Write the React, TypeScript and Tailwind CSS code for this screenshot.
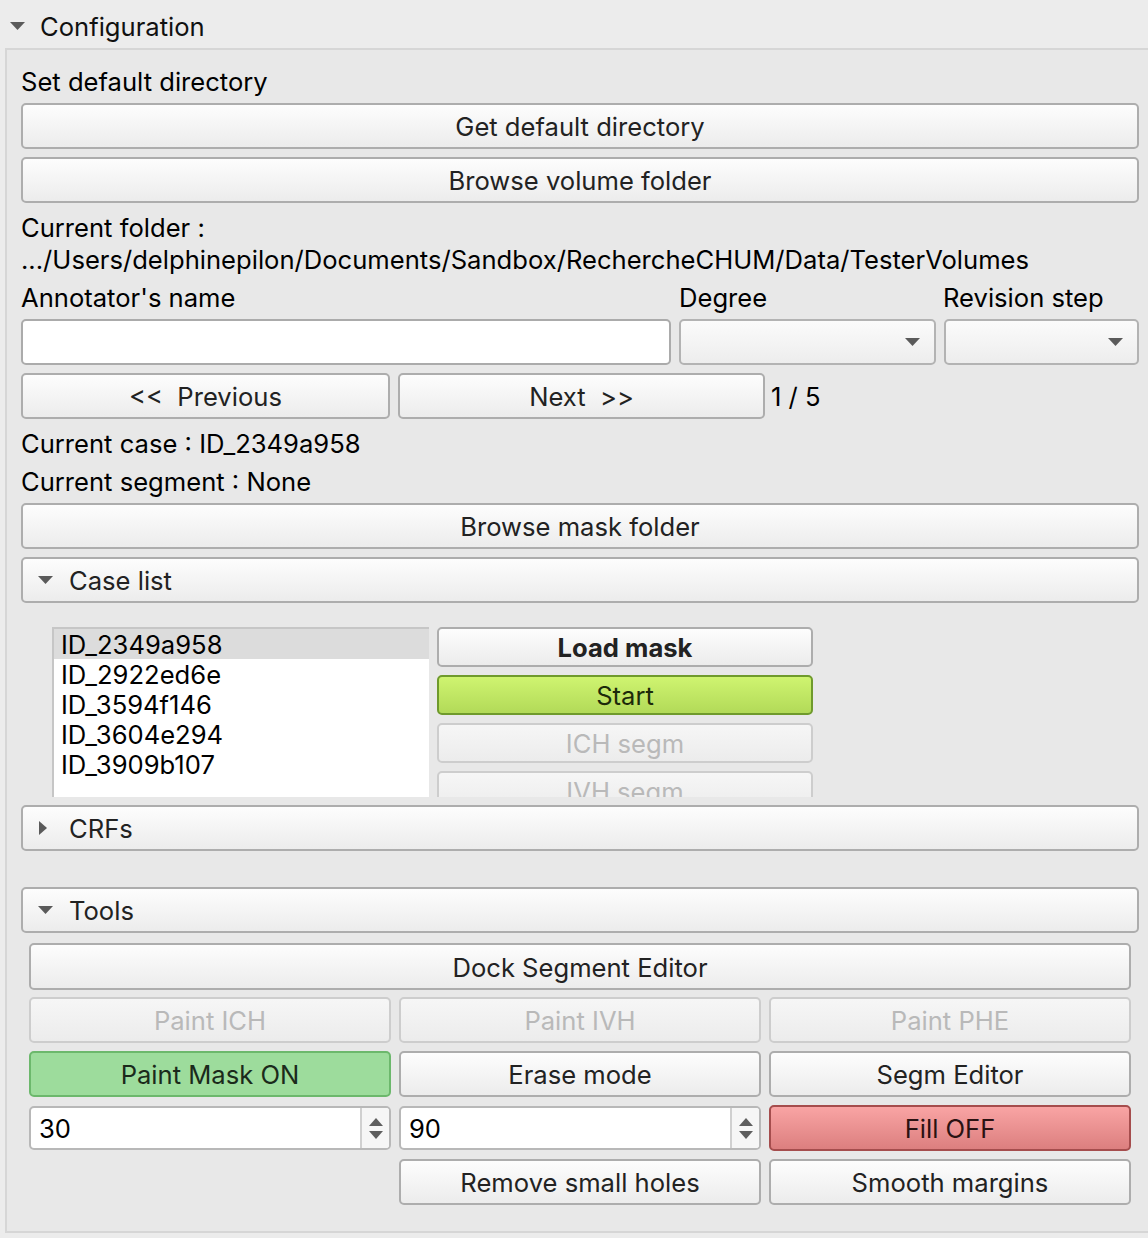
import React from "react";

const font = { fontFamily: "Inter, 'Noto Sans', sans-serif" };

function Tri({ dir = "down" }: { dir?: "down" | "right" }) {
  if (dir === "right")
    return (
      <svg width="10" height="16" viewBox="0 0 10 16" className="shrink-0">
        <path d="M1 1 L9 8 L1 15 Z" fill="#5a5a5a" />
      </svg>
    );
  return (
    <svg width="15" height="9" viewBox="0 0 15 9" className="shrink-0">
      <path d="M0 0 L15 0 L7.5 8 Z" fill="#5a5a5a" />
    </svg>
  );
}

function Btn({
  children,
  variant = "normal",
  className = "",
}: {
  children?: React.ReactNode;
  variant?: "normal" | "disabled" | "start" | "green" | "red" | "bold";
  className?: string;
}) {
  const styles: Record<string, string> = {
    normal: "border-[#adadad] bg-gradient-to-b from-[#fdfdfd] to-[#ececec] text-[#222]",
    bold: "border-[#adadad] bg-gradient-to-b from-[#fdfdfd] to-[#ececec] text-[#222] font-bold",
    disabled: "border-[#cdcdcd] bg-gradient-to-b from-[#f6f6f6] to-[#ececec] text-[#b9b9b9]",
    start: "border-[#6f9a2c] bg-gradient-to-b from-[#cff470] to-[#b2da58] text-[#1c2a0a]",
    green: "border-[#6cb86c] bg-[#9ddc9c] text-[#1b2a1b]",
    red: "border-[#a54d4d] bg-gradient-to-b from-[#f9a4a4] to-[#dc7f7f] text-[#2a1212]",
  };
  return (
    <div
      className={`flex items-center justify-center rounded-[5px] border-2 pt-[3px] ${styles[variant]} ${className}`}
    >
      {children}
    </div>
  );
}

function SectionHeader({ label, open = true }: { label: string; open?: boolean }) {
  return (
    <div className="flex h-[46px] items-center rounded-[5px] border-2 border-[#adadad] bg-gradient-to-b from-[#fdfdfd] to-[#ececec] pl-[14px] text-[#222]">
      <div className="flex w-[32px] justify-start pl-[1px]">
        <Tri dir={open ? "down" : "right"} />
      </div>
      <span className="pt-[3px]">{label}</span>
    </div>
  );
}

function Combo() {
  return (
    <div className="flex h-[46px] items-center justify-end rounded-[5px] border-2 border-[#b3b3b3] bg-gradient-to-b from-[#fbfbfb] to-[#ededed] pr-[14px]">
      <svg width="15" height="8" viewBox="0 0 15 8">
        <path d="M0 0 L15 0 L7.5 8 Z" fill="#5a5a5a" />
      </svg>
    </div>
  );
}

function Spin({ value }: { value: string }) {
  return (
    <div className="flex h-[44px] items-stretch overflow-hidden rounded-[5px] border-2 border-[#b8b8b8] bg-white">
      <div className="flex flex-1 items-center pl-[8px] pt-[3px] text-black">{value}</div>
      <div className="w-[2px] bg-[#d0d0d0]" />
      <div className="flex w-[27px] flex-col items-center justify-center gap-[5px] bg-[#f6f6f6]">
        <svg width="14" height="8" viewBox="0 0 14 8">
          <path d="M0 8 L14 8 L7 0 Z" fill="#5e5e5e" />
        </svg>
        <svg width="14" height="8" viewBox="0 0 14 8">
          <path d="M0 0 L14 0 L7 8 Z" fill="#5e5e5e" />
        </svg>
      </div>
    </div>
  );
}

const cases = ["ID_2349a958", "ID_2922ed6e", "ID_3594f146", "ID_3604e294", "ID_3909b107"];

export default function App() {
  return (
    <div className="h-[1238px] w-[1148px] overflow-hidden bg-[#ececec] text-[25.6px] text-black" style={font}>
      {/* Top collapsible header */}
      <div className="flex h-[48px] items-center pl-[10px] pt-[4px]">
        <div className="w-[30px]">
          <Tri />
        </div>
        <span className="pt-[2px] text-[#111]">Configuration</span>
      </div>

      {/* Configuration panel */}
      <div className="ml-[5px] h-[1185px] border-y-2 border-l-2 border-[#d6d6d6] bg-[#e8e8e8] pl-[14px] pr-[9px]">
        <div className="mt-[16px] flex h-[30px] items-center pt-[2px]">Set default directory</div>
        <Btn className="mt-[7px] h-[46px]">Get default directory</Btn>
        <Btn className="mt-[8px] h-[46px]">Browse volume folder</Btn>

        <div className="mt-[8px] flex h-[32px] items-center pt-[2px]">Current folder :</div>
        <div className="flex h-[32px] items-center whitespace-nowrap pt-[2px]">
          .../Users/delphinepilon/Documents/Sandbox/RechercheCHUM/Data/TesterVolumes
        </div>

        <div className="mt-[7px] flex h-[30px] items-center pt-[2px]">
          <span className="w-[658px]">Annotator's name</span>
          <span className="w-[264px]">Degree</span>
          <span>Revision step</span>
        </div>
        <div className="mt-[7px] flex gap-[8px]">
          <div className="h-[46px] w-[650px] rounded-[5px] border-2 border-[#ababab] bg-white" />
          <div className="w-[257px]">
            <Combo />
          </div>
          <div className="flex-1">
            <Combo />
          </div>
        </div>

        <div className="mt-[8px] flex items-center gap-[8px]">
          <Btn className="h-[46px] w-[369px]">&lt;&lt;&nbsp; Previous</Btn>
          <Btn className="h-[46px] w-[367px]">Next&nbsp; &gt;&gt;</Btn>
          <span className="-ml-[2px] pt-[2px]">1 / 5</span>
        </div>

        <div className="mt-[5px] flex h-[38px] items-center pt-[2px]">Current case : ID_2349a958</div>
        <div className="flex h-[38px] items-center pt-[2px]">Current segment : None</div>

        <Btn className="mt-[3px] h-[46px]">Browse mask folder</Btn>

        <div className="mt-[8px]">
          <SectionHeader label="Case list" />
        </div>
        <div className="flex h-[194px] gap-[8px] overflow-hidden pl-[31px] pt-[24px]">
          <div className="h-[200px] w-[377px] shrink-0 border-l-2 border-t-2 border-[#c6c6c6] bg-white">
            {cases.map((c, i) => (
              <div
                key={c}
                className={`flex h-[30px] items-center pl-[7px] pt-[2px] ${i === 0 ? "bg-[#dcdcdc]" : ""}`}
              >
                {c}
              </div>
            ))}
          </div>
          <div className="flex w-[376px] shrink-0 flex-col gap-[8px]">
            <Btn variant="bold" className="h-[40px] shrink-0">Load mask</Btn>
            <Btn variant="start" className="h-[40px] shrink-0">Start</Btn>
            <Btn variant="disabled" className="h-[40px] shrink-0">ICH segm</Btn>
            <Btn variant="disabled" className="h-[40px] shrink-0">IVH segm</Btn>
          </div>
        </div>

        <div className="mt-[8px]">
          <SectionHeader label="CRFs" open={false} />
        </div>

        <div className="mt-[36px]">
          <SectionHeader label="Tools" />
        </div>

        <div className="mt-[10px] pl-[8px] pr-[8px]">
          <Btn className="h-[47px]">Dock Segment Editor</Btn>
          <div className="mt-[7px] grid grid-cols-3 gap-x-[8px] gap-y-[8px]">
            <Btn variant="disabled" className="h-[46px]">Paint ICH</Btn>
            <Btn variant="disabled" className="h-[46px]">Paint IVH</Btn>
            <Btn variant="disabled" className="h-[46px]">Paint PHE</Btn>

            <Btn variant="green" className="h-[46px]">Paint Mask ON</Btn>
            <Btn className="h-[46px]">Erase mode</Btn>
            <Btn className="h-[46px]">Segm Editor</Btn>

            <div className="flex items-center">
              <div className="w-full">
                <Spin value="30" />
              </div>
            </div>
            <div className="flex items-center">
              <div className="w-full">
                <Spin value="90" />
              </div>
            </div>
            <Btn variant="red" className="h-[46px]">Fill OFF</Btn>

            <div />
            <Btn className="h-[46px]">Remove small holes</Btn>
            <Btn className="h-[46px]">Smooth margins</Btn>
          </div>
        </div>
      </div>
    </div>
  );
}
